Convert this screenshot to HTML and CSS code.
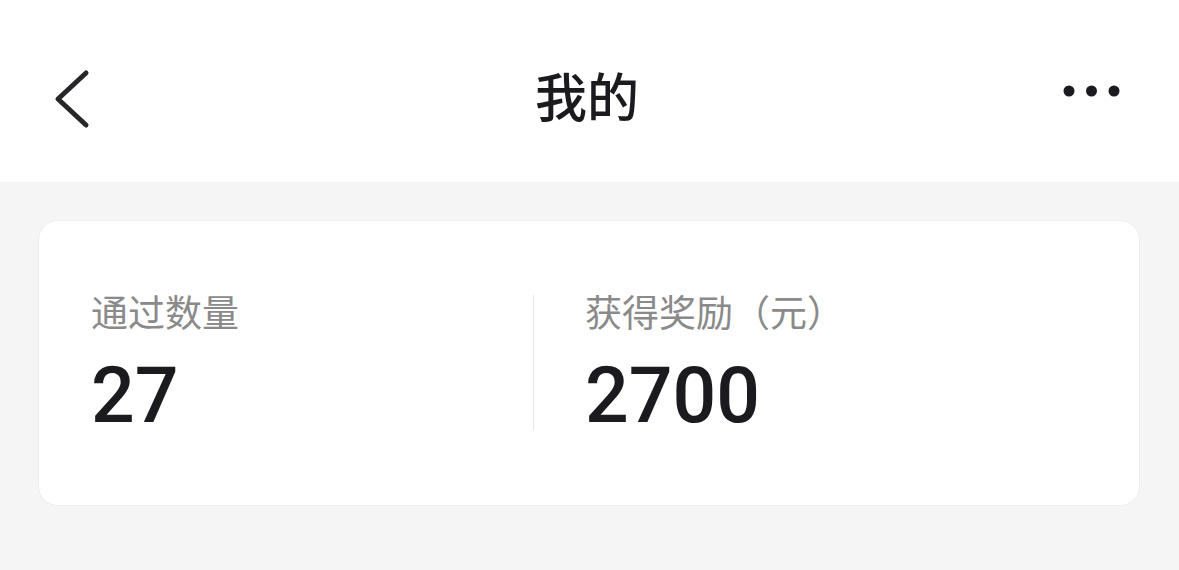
FILE: index.html
```html
<!DOCTYPE html>
<html lang="zh-CN">
<head>
    <meta charset="UTF-8">
    <meta name="viewport" content="width=device-width, initial-scale=1.0">
    <title>我的</title>
    <link rel="stylesheet" href="styles.css">
</head>
<body>
    <div class="nav_bar">
        <div class="nav_side">
            <svg class="back_icon" width="36" height="60" viewBox="0 0 36 60">
                <polyline points="32,4 4,30 32,56" fill="none" stroke="#26262b" stroke-width="5" stroke-linecap="round" stroke-linejoin="round"/>
            </svg>
        </div>
        <h1 class="nav_title">我的</h1>
        <div class="nav_side nav_side_right">
            <svg class="more_icon" width="57" height="12" viewBox="0 0 57 12">
                <circle cx="6" cy="6" r="5.5" fill="#1a1a1f"/>
                <circle cx="28.5" cy="6" r="5.5" fill="#1a1a1f"/>
                <circle cx="51" cy="6" r="5.5" fill="#1a1a1f"/>
            </svg>
        </div>
    </div>

    <div class="page">
        <div class="stat_card">
            <div class="stat_item">
                <div class="stat_label">通过数量</div>
                <div class="stat_value">27</div>
            </div>
            <div class="stat_divider"></div>
            <div class="stat_item stat_item_right">
                <div class="stat_label">获得奖励（元）</div>
                <div class="stat_value">2700</div>
            </div>
        </div>
    </div>
</body>
</html>
```

FILE: styles.css
```css
body{
    margin:0;
    background:#f5f5f5;
    font-family:"Noto Sans CJK SC","Noto Sans",sans-serif;
}

.nav_bar{
    height:182px;
    background:#fff;
    display:flex;
    align-items:center;
    justify-content:space-between;
    padding:0 59px 0 54px;
}

.nav_side{
    width:100px;
    display:flex;
    align-items:center;
}

.nav_side_right{
    justify-content:flex-end;
}

.back_icon{
    display:block;
    margin-top:16px;
}

.more_icon{
    display:block;
}

.nav_title{
    margin:7px 0 0 0;
    font-size:52px;
    font-weight:500;
    line-height:1;
    color:#1a1a1f;
}

.page{
    padding:38px 38px 0 38px;
}

.stat_card{
    background:#fff;
    border:1px solid #ededed;
    border-radius:20px;
    height:286px;
    box-sizing:border-box;
    padding:72px 52px 0 52px;
    display:flex;
    align-items:flex-start;
    width:1102px;
}

.stat_item{
    width:442px;
}

.stat_item_right{
    padding-left:51px;
}

.stat_divider{
    width:1px;
    height:135px;
    margin-top:2px;
    background:#e6e6e6;
}

.stat_label{
    font-size:37px;
    line-height:1;
    color:#8a8a8a;
}

.stat_value{
    margin-top:28px;
    font-family:Roboto,"Liberation Sans",sans-serif;
    font-weight:500;
    font-size:77px;
    line-height:1;
    color:#1a1a1f;
}
```
